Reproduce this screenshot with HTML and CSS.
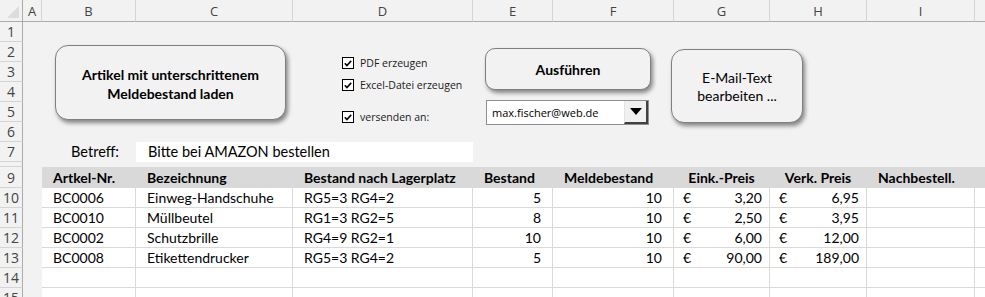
FILE: index.html
```html
<!DOCTYPE html>
<html lang="de">
<head>
  <meta charset="UTF-8" />
  <title>Nachbestellung</title>
  <link rel="stylesheet" href="styles.css">
</head>
<body>
  <div class="sheet">
    <table class="grid">
      <colgroup>
        <col style="width:23px"><col style="width:19px"><col style="width:94px"><col style="width:157px">
        <col style="width:180px"><col style="width:80px"><col style="width:121px"><col style="width:96px">
        <col style="width:97px"><col style="width:108px"><col style="width:60px">
      </colgroup>
      <thead>
        <tr class="colhead">
          <th class="corner"><span class="tri"></span></th>
          <th>A</th><th>B</th><th>C</th><th>D</th><th>E</th><th>F</th><th>G</th><th>H</th><th>I</th><th></th>
        </tr>
      </thead>
      <tbody>
        <tr><th>1</th><td colspan="10"></td></tr>
        <tr><th>2</th><td colspan="10"></td></tr>
        <tr><th>3</th><td colspan="10"></td></tr>
        <tr><th>4</th><td colspan="10"></td></tr>
        <tr><th>5</th><td colspan="10"></td></tr>
        <tr><th>6</th><td colspan="10"></td></tr>
        <tr>
          <th>7</th><td></td>
          <td class="label">Betreff:</td>
          <td colspan="2" class="subject">Bitte bei AMAZON bestellen</td>
          <td colspan="6"></td>
        </tr>
        <tr class="thin"><th></th><td colspan="10"></td></tr>
        <tr class="head">
          <th>9</th><td class="blank"></td>
          <td>Artkel-Nr.</td><td>Bezeichnung</td><td>Bestand nach Lagerplatz</td>
          <td>Bestand</td><td>Meldebestand</td><td class="center">Eink.-Preis</td>
          <td class="center">Verk. Preis</td><td>Nachbestell.</td><td></td>
        </tr>
        <tr class="row">
          <th>10</th><td class="blank"></td>
          <td>BC0006</td><td>Einweg-Handschuhe</td><td>RG5=3 RG4=2</td>
          <td class="num">5</td><td class="num">10</td>
          <td class="money"><span>€</span><span>3,20</span></td>
          <td class="money"><span>€</span><span>6,95</span></td><td></td><td></td>
        </tr>
        <tr class="row">
          <th>11</th><td class="blank"></td>
          <td>BC0010</td><td>Müllbeutel</td><td>RG1=3 RG2=5</td>
          <td class="num">8</td><td class="num">10</td>
          <td class="money"><span>€</span><span>2,50</span></td>
          <td class="money"><span>€</span><span>3,95</span></td><td></td><td></td>
        </tr>
        <tr class="row">
          <th>12</th><td class="blank"></td>
          <td>BC0002</td><td>Schutzbrille</td><td>RG4=9 RG2=1</td>
          <td class="num">10</td><td class="num">10</td>
          <td class="money"><span>€</span><span>6,00</span></td>
          <td class="money"><span>€</span><span>12,00</span></td><td></td><td></td>
        </tr>
        <tr class="row">
          <th>13</th><td class="blank"></td>
          <td>BC0008</td><td>Etikettendrucker</td><td>RG5=3 RG4=2</td>
          <td class="num">5</td><td class="num">10</td>
          <td class="money"><span>€</span><span>90,00</span></td>
          <td class="money"><span>€</span><span>189,00</span></td><td></td><td></td>
        </tr>
        <tr class="row">
          <th>14</th><td class="blank"></td>
          <td></td><td></td><td></td><td></td><td></td><td></td><td></td><td></td><td></td>
        </tr>
        <tr class="row">
          <th>15</th><td class="blank"></td>
          <td></td><td></td><td></td><td></td><td></td><td></td><td></td><td></td><td></td>
        </tr>
      </tbody>
    </table>

    <!-- Steuerelemente liegen frei über den Zellen -->
    <button class="btn btn-load"><b>Artikel mit unterschrittenem<br>Meldebestand laden</b></button>

    <div class="options">
      <label class="opt"><span class="box"><svg viewBox="0 0 11 11" width="11" height="11"><path d="M2 5.2 L4.3 7.8 L9 2.6" fill="none" stroke="#000" stroke-width="1.7"/></svg></span>PDF erzeugen</label>
      <label class="opt"><span class="box"><svg viewBox="0 0 11 11" width="11" height="11"><path d="M2 5.2 L4.3 7.8 L9 2.6" fill="none" stroke="#000" stroke-width="1.7"/></svg></span>Excel-Datei erzeugen</label>
      <label class="opt opt-last"><span class="box"><svg viewBox="0 0 11 11" width="11" height="11"><path d="M2 5.2 L4.3 7.8 L9 2.6" fill="none" stroke="#000" stroke-width="1.7"/></svg></span>versenden an:</label>
    </div>

    <button class="btn btn-run"><b>Ausführen</b></button>

    <div class="combo">
      <span class="combo-text">max.fischer@web.de</span>
      <span class="combo-arrow"><svg viewBox="0 0 12 7" width="12" height="7"><path d="M0 0 H12 L6 7 Z" fill="#000"/></svg></span>
    </div>

    <button class="btn btn-mail">E-Mail-Text<br>bearbeiten ...</button>
  </div>
</body>
</html>
```

FILE: styles.css
```css
* { box-sizing: border-box; }
html, body { margin: 0; padding: 0; }
body {
  width: 985px; height: 297px;
  overflow: hidden;
  background: #f2f2f2;
  font-family: Lato, "Liberation Sans", sans-serif;
  color: #000;
}
.sheet { position: relative; width: 985px; height: 297px; overflow: hidden; }

/* Tabellenraster */
.grid {
  table-layout: fixed;
  border-collapse: separate;
  border-spacing: 0;
  width: 1035px;
  font-size: 14px;
}
.grid td, .grid th {
  padding: 0;
  height: 20px;
  border-right: 1px solid transparent;
  border-bottom: 1px solid transparent;
  white-space: nowrap;
  overflow: hidden;
}
.grid tbody th {
  font: 14px "Open Sans", "Noto Sans", sans-serif;
  color: #444;
  text-align: center;
  border-right: 1px solid #ababab;
  border-bottom: 1px solid #d4d4d4;
}
.colhead th {
  height: 22px;
  font: 13px "Open Sans", "Noto Sans", sans-serif;
  font-weight: normal;
  color: #444;
  text-align: center;
  border-right: 1px solid #d4d4d4;
  border-bottom: 1px solid #ababab;
}
.colhead .corner { position: relative; border-right-color: #ababab; }
.tri {
  position: absolute; right: 3px; bottom: 3px;
  width: 0; height: 0;
  border-left: 12px solid transparent;
  border-bottom: 12px solid #dcdcdc;
}
.grid tr.thin th, .grid tr.thin td { height: 5px; font-size: 1px; }

.label { text-align: right; padding-right: 16px !important; font-size: 14.5px; }
.subject { background: #fff; padding-left: 12px !important; font-size: 14.5px; }

.head td {
  height: 21px;
  background: #d9d9d9;
  border-color: #d9d9d9;
  font-weight: bold;
  padding-left: 11px;
}
.head td.center { text-align: center; padding-left: 0; }
.row td {
  background: #fff;
  border-right-color: #d9d9d9;
  border-bottom-color: #d9d9d9;
  padding-left: 11px;
}
.head td.blank, .row td.blank { background: transparent; border-color: transparent; padding: 0; }
.row td.num { text-align: right; padding: 0 11px 0 0; }
.row td.money { padding: 0 7px 0 9px; }
.money span:first-child { float: left; }
.money span:last-child { float: right; }

/* Schaltflächen und Formularelemente */
.btn {
  position: absolute;
  background: #f2f2f2;
  border: 1px solid #7f7f7f;
  border-radius: 13px;
  box-shadow: 2px 3px 4px rgba(0,0,0,0.45);
  font-family: Lato, "Liberation Sans", sans-serif;
  font-size: 14px;
  line-height: 19px;
  color: #000;
  padding: 0;
}
.btn b { font-weight: bold; }
.btn-load { left: 55px; top: 45px; width: 231px; height: 75px; padding-top: 2px; }
.btn-run { left: 485px; top: 48px; width: 166px; height: 42px; border-radius: 10px; }
.btn-mail { left: 671px; top: 49px; width: 132px; height: 74px; line-height: 18px; padding-top: 2px; }

.options {
  position: absolute; left: 342px; top: 57px;
  display: flex; flex-direction: column;
  font: 10.5px "Open Sans", "Noto Sans", sans-serif;
  color: #1a1a1a;
}
.opt { display: flex; align-items: center; gap: 6px; height: 12px; margin-bottom: 10px; }
.opt-last { margin-top: 10px; }
.box {
  width: 12px; height: 12px;
  border: 1px solid #000;
  background: #fff;
  display: flex;
}

.combo {
  position: absolute; left: 486px; top: 100px;
  width: 163px; height: 25px;
  background: #fff;
  border: 1px solid #8e8e8e;
  display: flex; align-items: stretch;
}
.combo-text {
  flex: 1;
  font: 11px "Open Sans", "Noto Sans", sans-serif;
  color: #000;
  padding: 4px 0 0 5px;
}
.combo-arrow {
  width: 24px;
  background: #f0f0f0;
  border-left: 1px solid #e4e4e4;
  border-right: 2px solid #404040;
  border-bottom: 2px solid #404040;
  display: flex; align-items: center; justify-content: center;
}
```
